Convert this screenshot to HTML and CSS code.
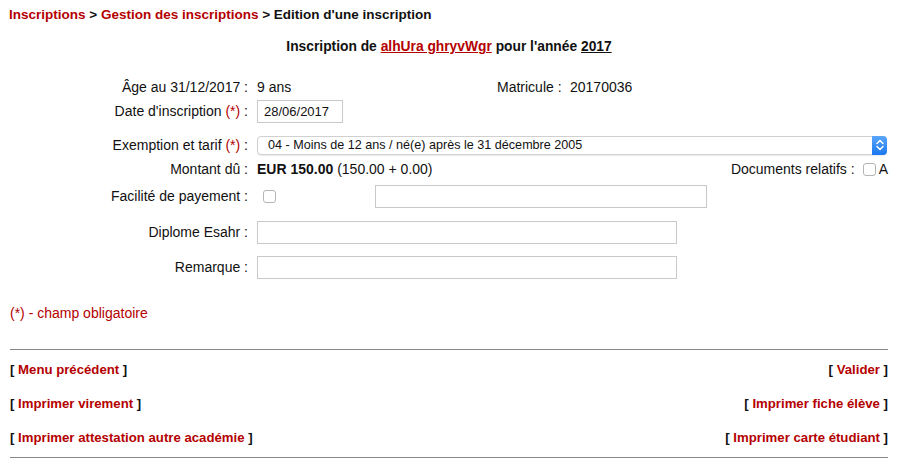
FILE: index.html
```html
<!DOCTYPE html>
<html lang="fr">
<head>
<meta charset="utf-8">
<title>Edition d'une inscription</title>
<link rel="stylesheet" href="styles.css">
</head>
<body>
<div class="page">
  <div class="crumbs"><a href="#">Inscriptions</a> &gt; <a href="#">Gestion des inscriptions</a> &gt; Edition d'une inscription</div>
  <div class="title">Inscription de <a href="#" class="ul">alhUra ghryvWgr</a> pour l'année <span class="ul">2017</span></div>

  <div class="form">
    <div class="row r-age">
      <div class="lab">Âge au 31/12/2017 :</div>
      <div class="val w-age">9 ans</div>
      <div class="lab2">Matricule :</div>
      <div class="val">20170036</div>
    </div>
    <div class="row r-date">
      <div class="lab">Date d'inscription <span class="req">(*)</span> :</div>
      <div class="val"><input class="inp inp-date" type="text" value="28/06/2017"></div>
    </div>
    <div class="row r-exe">
      <div class="lab">Exemption et tarif <span class="req">(*)</span> :</div>
      <div class="val sel-wrap">
        <select class="sel"><option>04 - Moins de 12 ans / né(e) après le 31 décembre 2005</option></select>
        <span class="stepper"><svg width="14" height="18" viewBox="0 0 14 18"><path d="M4 7.5 L7 4.5 L10 7.5" fill="none" stroke="#fff" stroke-width="1.5" stroke-linecap="round" stroke-linejoin="round"/><path d="M4 10.5 L7 13.5 L10 10.5" fill="none" stroke="#fff" stroke-width="1.5" stroke-linecap="round" stroke-linejoin="round"/></svg></span>
      </div>
    </div>
    <div class="row r-mont">
      <div class="lab">Montant dû :</div>
      <div class="val grow"><b>EUR 150.00</b> (150.00 + 0.00)</div>
      <div class="docs">Documents relatifs : <span class="cb cb-doc"></span> A</div>
    </div>
    <div class="row r-fac">
      <div class="lab">Facilité de payement :</div>
      <div class="val fac"><span class="cb"></span><input class="inp inp-fac" type="text"></div>
    </div>
    <div class="row r-dip">
      <div class="lab">Diplome Esahr :</div>
      <div class="val"><input class="inp inp-long" type="text"></div>
    </div>
    <div class="row r-rem">
      <div class="lab">Remarque :</div>
      <div class="val"><input class="inp inp-long" type="text"></div>
    </div>
  </div>

  <div class="oblig">(*) - champ obligatoire</div>

  <div class="actions">
    <div class="arow"><span>[ <a href="#">Menu précédent</a> ]</span><span>[ <a href="#">Valider</a> ]</span></div>
    <div class="arow"><span>[ <a href="#">Imprimer virement</a> ]</span><span>[ <a href="#">Imprimer fiche élève</a> ]</span></div>
    <div class="arow"><span>[ <a href="#">Imprimer attestation autre académie</a> ]</span><span>[ <a href="#">Imprimer carte étudiant</a> ]</span></div>
  </div>
</div>
</body>
</html>
```

FILE: styles.css
```css
* { box-sizing: border-box; }
html, body { margin: 0; padding: 0; background: #fff; }
body {
  font-family: "Liberation Sans", Arial, sans-serif;
  font-size: 14px;
  color: #111;
}
a { color: #b40000; text-decoration: none; }
.page { width: 899px; padding: 0 11px 0 10px; }

.crumbs {
  font-weight: bold;
  font-size: 13.5px;
  padding-top: 6px;
  height: 26px;
  line-height: 18px;
  margin-left: -1px;
}
.title {
  font-weight: bold;
  font-size: 13.8px;
  text-align: center;
  height: 22px;
  line-height: 18px;
  margin-top: 12px;
}
.ul { text-decoration: underline; }
.title a.ul { color: #b40000; }

.form { margin-top: 16px; }
.row { display: flex; align-items: center; }
.lab { width: 240px; text-align: right; padding-right: 2px; white-space: nowrap; }
.val { padding-left: 7px; white-space: nowrap; }
.w-age { width: 247px; }
.lab2 { width: 66px; text-align: left; }
.req { color: #b40000; }
.grow { flex: 1; }

.r-age { height: 22px; }
.r-date { height: 24px; margin-top: 1px; }
.r-exe { height: 22px; margin-top: 11px; }
.r-mont { height: 22px; margin-top: 2px; }
.r-fac { height: 24px; margin-top: 4px; }
.r-dip { height: 24px; margin-top: 12px; }
.r-rem { height: 24px; margin-top: 11px; }

.inp {
  font-family: "Liberation Sans", Arial, sans-serif;
  font-size: 13px;
  color: #111;
  border: 1px solid #c9c9c9;
  height: 23px;
  padding: 2px 6px;
  display: block;
  outline: none;
}
.inp-date { width: 86px; }
.inp-long { width: 420px; }

.sel-wrap { position: relative; }
.sel {
  -webkit-appearance: none;
  appearance: none;
  width: 630px;
  height: 19px;
  border: 1px solid #d0d0d0;
  border-radius: 4px;
  background: #fff;
  font-family: "Liberation Sans", Arial, sans-serif;
  font-size: 12.6px;
  color: #111;
  padding: 0 0 0 10px;
  display: block;
  box-shadow: 0 1px 1px rgba(0,0,0,0.08);
}
.stepper {
  position: absolute;
  right: 0;
  top: 0;
  width: 15px;
  height: 19px;
  background: linear-gradient(#5aa6fb, #1b78f0);
  border-radius: 0 4px 4px 0;
  display: flex;
  align-items: center;
  justify-content: center;
}
.stepper svg { display: block; }

.cb {
  display: inline-block;
  width: 13px;
  height: 13px;
  border: 1px solid #b5b5b5;
  border-radius: 3px;
  background: #fff;
  vertical-align: -2px;
}
.fac { display: flex; align-items: center; padding-left: 13px; }
.inp-fac { width: 332px; margin-left: 99px; }
.docs { white-space: nowrap; padding-right: 0; }
.cb-doc { margin-left: 4px; }

.oblig { color: #b40000; margin-top: 25px; height: 18px; line-height: 18px; }

.actions {
  margin-top: 27px;
  border-top: 1px solid #888;
  border-bottom: 1px solid #888;
  padding-top: 11px;
  padding-bottom: 10px;
}
.arow {
  display: flex;
  justify-content: space-between;
  font-weight: bold;
  font-size: 13.2px;
  height: 18px;
  line-height: 18px;
  margin-bottom: 16px;
}
.arow:last-child { margin-bottom: 0; }
```
